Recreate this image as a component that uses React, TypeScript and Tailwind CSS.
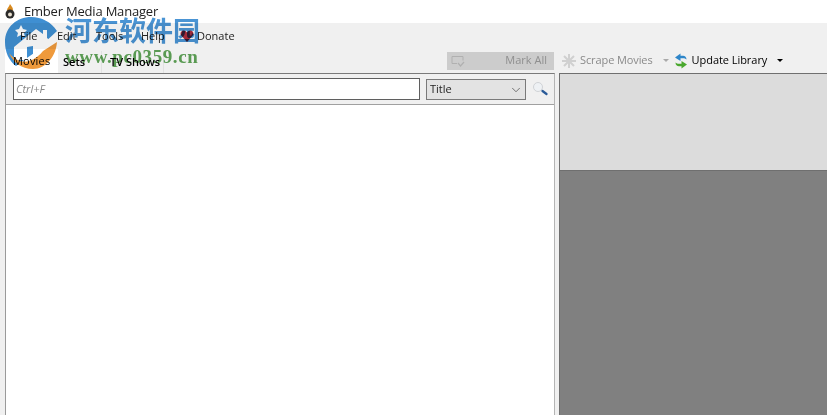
import { ChevronDown } from 'lucide-react';

function FlameIcon() {
  return (
    <svg width="14" height="16" viewBox="0 0 14 16">
      <path d="M7 0c1 2 3 3 3 6 0 1-1 2-3 2S4 7 4 6c0-2 2-3 3-6z" fill="#d98a1e" />
      <circle cx="7" cy="10" r="4.5" fill="#2b2b2b" />
      <circle cx="7" cy="10.5" r="2" fill="#e8e0d0" />
    </svg>
  );
}

function HeartIcon() {
  return (
    <svg width="14" height="14" viewBox="0 0 14 14">
      <path d="M7 13L1.2 6.6C-.4 4.6 1 1.5 3.6 1.5 5 1.5 6.300 2.300 7 3.500 7.700 2.300 9 1.500 10.400 1.500 13 1.500 14.400 4.600 12.800 6.600z" fill="#a32a3a" />
    </svg>
  );
}

function MarkIcon() {
  return (
    <svg width="16" height="14" viewBox="0 0 16 14" fill="none" stroke="#b0b0b0" strokeWidth="1">
      <path d="M1 2.500h11v4M1 2.500v7h5" />
      <path d="M7 9l2.500 3L13 8" strokeWidth="1.200" />
    </svg>
  );
}

function ScrapeIcon() {
  return (
    <svg width="14" height="14" viewBox="0 0 14 14" stroke="#d0d0d0" strokeWidth="2">
      <path d="M7 0v14M0 7h14M2 2l10 10M12 2L2 12" />
    </svg>
  );
}

function UpdateIcon() {
  return (
    <svg width="14" height="16" viewBox="0 0 14 16">
      <path d="M1 4.500L6.500 .5v2.200h2.500c2 0 3.500 1.300 3.500 3.800-1-1-2-1.300-3.500-1.300H6.500v2.800z" fill="#2e86c9" />
      <path d="M13 11.500L7.500 15.500v-2.200H5c-2 0-3.500-1.300-3.500-3.800 1 1 2 1.300 3.500 1.300h2.500V8z" fill="#4aa82e" />
    </svg>
  );
}

function SearchIcon() {
  return (
    <svg width="16" height="16" viewBox="0 0 16 16" fill="none">
      <circle cx="6" cy="6" r="4.500" fill="#eef1f4" stroke="#d0d3d6" strokeWidth="1" />
      <path d="M10.500 10L14.500 13" stroke="#2a5a98" strokeWidth="2.200" strokeLinecap="round" />
    </svg>
  );
}

function Watermark() {
  return (
    <div className="absolute left-0 top-0 w-[210px] h-[72px] pointer-events-none mix-blend-multiply">
      <svg className="absolute left-0 top-[14px]" width="62" height="58" viewBox="0 0 62 58">
        <path d="M5 28C5 13 17 3 31 3c11 0 20 5 26 14-6 6-14 12-20 20L24 46l-8 6C9 47 5 38 5 28z" fill="#3f8fd2" />
        <path d="M14 46V33L36 15l7 5v-4h4v8l5 4-6 1v12H33v-9l-6 1v13z" fill="#ffffff" />
        <path d="M21 11l2 4 4 1-3 3 1 4-4-2-4 2 1-4-3-3 4-1z" fill="#ffffff" />
        <path d="M9 39c7 8 14 10 20 8 6-2 11-6 14-10l14-9c-1 14-11 27-24 27-12 0-20-7-24-16z" fill="#ef9a3c" />
      </svg>
      <span className="absolute left-[65px] top-[14px] whitespace-nowrap text-[27px] leading-[32px] font-bold text-[#4a94d4] font-['Noto_Sans_CJK_SC',sans-serif]">河东软件园</span>
      <span className="absolute left-[65px] top-[47px] whitespace-nowrap text-[19px] leading-[20px] font-bold tracking-[0.6px] text-[#5fa458] font-['Liberation_Serif',serif]">www.pc0359.cn</span>
    </div>
  );
}

export default function App() {
  return (
    <div className="relative w-[827px] h-[415px] overflow-hidden flex flex-col bg-[#f0f0f0] font-['Open_Sans',sans-serif] text-[11px] text-black">
      {/* Title bar */}
      <div className="h-[23px] bg-white flex items-center pl-[3px] gap-[7px]">
        <FlameIcon />
        <span className="text-[13px] tracking-[-0.2px] text-[#222]">Ember Media Manager</span>
      </div>

      {/* Menu */}
      <div className="h-[24px] flex items-center pl-[20px] pt-[2px] text-[#222]">
        <span className="w-[37px]">File</span>
        <span className="w-[39px]">Edit</span>
        <span className="w-[45px]">Tools</span>
        <span className="w-[39px]">Help</span>
        <span className="flex items-center gap-[3px]"><HeartIcon />Donate</span>
      </div>

      {/* Tabs and toolbar */}
      <div className="h-[26px] flex items-end pl-[5px]">
        <div className="w-[53px] h-[24px] bg-white flex items-center pl-[8px] tracking-[0.2px]">Movies</div>
        <div className="w-[44px] h-[22px] border-r border-[#e2e2e2] flex items-center pl-[5px] font-semibold">Sets</div>
        <div className="w-[62px] h-[22px] border-r border-[#e2e2e2] flex items-center pl-[8px] font-semibold">TV Shows</div>
        <div className="ml-[283px] self-center mt-[1px] w-[107px] h-[18px] bg-[#cccccc] flex items-center justify-between pl-[4px] pr-[7px] text-[#8f8f8f]">
          <MarkIcon />
          <span>Mark All</span>
        </div>
        <div className="self-center mt-[1px] ml-[8px] flex items-center text-[#8a8a8a]">
          <ScrapeIcon />
          <span className="ml-[4px] tracking-[-0.1px]">Scrape Movies</span>
          <span className="ml-[10px] w-0 h-0 border-x-[3px] border-x-transparent border-t-[3px] border-t-[#aaaaaa]" />
          <span className="ml-[5px]"><UpdateIcon /></span>
          <span className="ml-[4px] text-black font-medium tracking-[-0.05px]">Update Library</span>
          <span className="ml-[10px] w-0 h-0 border-x-[3px] border-x-transparent border-t-[3px] border-t-black" />
        </div>
      </div>

      {/* Panels */}
      <div className="flex-1 flex pl-[5px] min-h-0">
        <div className="w-[550px] flex flex-col border-t border-x border-[#7a7a7a] bg-[#f0f0f0] border-r-[#b4b4b4] border-l-[#9a9a9a]">
          <div className="h-[31px] flex items-center pl-[7px] border-b border-[#a0a0a0] shrink-0">
            <div className="w-[407px] h-[22px] bg-white border border-[#5f5f5f] flex items-center pl-[2px] italic text-[#888]">Ctrl+F</div>
            <div className="ml-[6px] w-[100px] h-[21px] bg-[#e3e3e3] border border-[#7a7a7a] flex items-center justify-between pl-[3px] pr-[2px] pt-[1px] font-medium text-[#222]">
              Title
              <ChevronDown size={14} strokeWidth={1.200} className="text-[#444]" />
            </div>
            <span className="ml-[6px]"><SearchIcon /></span>
          </div>
          <div className="flex-1 bg-white" />
        </div>
        <div className="ml-[4px] flex-1 flex flex-col border-t border-l border-[#6f6f6f]">
          <div className="h-[97px] bg-[#dcdcdc] border-b border-[#6f6f6f] shrink-0" />
          <div className="flex-1 bg-[#808080]" />
        </div>
      </div>

      <Watermark />
    </div>
  );
}
